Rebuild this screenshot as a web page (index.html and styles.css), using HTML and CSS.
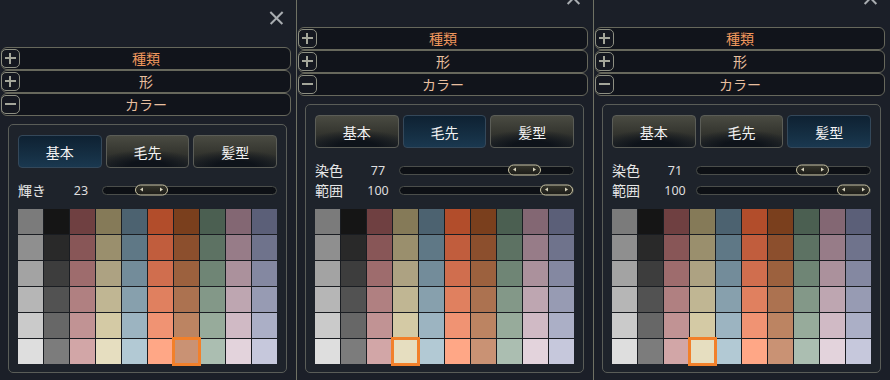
FILE: index.html
```html
<!DOCTYPE html>
<html lang="ja">
<head>
    <meta charset="UTF-8">
    <meta name="viewport" content="width=device-width, initial-scale=1.0">
    <title>ヘアカラー</title>
    <link rel="stylesheet" href="styles.css">
</head>
<body>
    <div class="screens">
        <!-- 基本 -->
        <section class="panel">
            <div class="panel-top"><span class="close-btn"></span></div>
            <div class="acc-row"><span class="acc-icon plus"></span><span class="acc-label hot">種類</span></div>
            <div class="acc-row"><span class="acc-icon plus"></span><span class="acc-label">形</span></div>
            <div class="acc-row"><span class="acc-icon minus"></span><span class="acc-label">カラー</span></div>

            <div class="color-box">
                <div class="tabs">
                    <div class="tab active">基本</div>
                    <div class="tab">毛先</div>
                    <div class="tab">髪型</div>
                </div>
                <div class="slider-row">
                    <span class="slider-label">輝き</span>
                    <span class="slider-value">23</span>
                    <div class="track"><span class="thumb" style="--v: 0.23"></span></div>
                </div>
                <div class="swatch-grid" data-selected="56"></div>
            </div>
        </section>

        <!-- 毛先 -->
        <section class="panel panel-shift">
            <div class="panel-top"><span class="close-btn"></span></div>
            <div class="acc-row"><span class="acc-icon plus"></span><span class="acc-label hot">種類</span></div>
            <div class="acc-row"><span class="acc-icon plus"></span><span class="acc-label">形</span></div>
            <div class="acc-row"><span class="acc-icon minus"></span><span class="acc-label">カラー</span></div>

            <div class="color-box">
                <div class="tabs">
                    <div class="tab">基本</div>
                    <div class="tab active">毛先</div>
                    <div class="tab">髪型</div>
                </div>
                <div class="slider-row">
                    <span class="slider-label">染色</span>
                    <span class="slider-value">77</span>
                    <div class="track"><span class="thumb" style="--v: 0.77"></span></div>
                </div>
                <div class="slider-row">
                    <span class="slider-label">範囲</span>
                    <span class="slider-value">100</span>
                    <div class="track"><span class="thumb" style="--v: 1"></span></div>
                </div>
                <div class="swatch-grid" data-selected="53"></div>
            </div>
        </section>

        <!-- 髪型 -->
        <section class="panel panel-shift">
            <div class="panel-top"><span class="close-btn"></span></div>
            <div class="acc-row"><span class="acc-icon plus"></span><span class="acc-label hot">種類</span></div>
            <div class="acc-row"><span class="acc-icon plus"></span><span class="acc-label">形</span></div>
            <div class="acc-row"><span class="acc-icon minus"></span><span class="acc-label">カラー</span></div>

            <div class="color-box">
                <div class="tabs">
                    <div class="tab">基本</div>
                    <div class="tab">毛先</div>
                    <div class="tab active">髪型</div>
                </div>
                <div class="slider-row">
                    <span class="slider-label">染色</span>
                    <span class="slider-value">71</span>
                    <div class="track"><span class="thumb" style="--v: 0.71"></span></div>
                </div>
                <div class="slider-row">
                    <span class="slider-label">範囲</span>
                    <span class="slider-value">100</span>
                    <div class="track"><span class="thumb" style="--v: 1"></span></div>
                </div>
                <div class="swatch-grid" data-selected="53"></div>
            </div>
        </section>
    </div>

    <script>
        // Palette, one column per hue, light steps from top to bottom
        const palette = [
            ['#7b7b7b', '#8f8f8f', '#a3a3a3', '#b6b6b6', '#cacaca', '#dedede'],
            ['#151515', '#292929', '#3d3d3d', '#525252', '#676767', '#7c7c7c'],
            ['#6f4041', '#885657', '#9e6c6d', '#b08081', '#c19394', '#d2a6a7'],
            ['#857a58', '#9a8f6d', '#ada282', '#c0b693', '#d4caa5', '#e6dec0'],
            ['#4c6270', '#5f7886', '#738c9a', '#87a0ad', '#9cb4c1', '#b2c9d4'],
            ['#b24d2b', '#c15d3d', '#d06e4e', '#e0805f', '#f09373', '#ffa786'],
            ['#7a3f1d', '#8c4f2d', '#9c613e', '#ac7250', '#bc8462', '#c99274'],
            ['#4b5f51', '#5d7263', '#6f8575', '#839888', '#97ab9b', '#abbeb1'],
            ['#836773', '#977c88', '#ab919c', '#bea6b1', '#d0bac5', '#e3d3dc'],
            ['#5b5f78', '#6f738c', '#8488a1', '#979bb3', '#abafc6', '#c6c8dc']
        ];

        // Render swatches into every grid
        document.querySelectorAll('.swatch-grid').forEach(grid => {
            const selected = Number(grid.dataset.selected);

            for (let row = 0; row < 6; row++) {
                for (let col = 0; col < 10; col++) {
                    const cell = document.createElement('div');
                    cell.className = 'swatch';
                    cell.style.backgroundColor = palette[col][row];

                    if (row * 10 + col === selected) {
                        cell.classList.add('selected');
                    }

                    grid.appendChild(cell);
                }
            }
        });
    </script>
</body>
</html>
```

FILE: styles.css
```css
* {
    box-sizing: border-box;
    margin: 0;
    padding: 0;
}

body {
    background-color: #1b1f28;
    font-family: "Noto Sans CJK JP", "Noto Sans", sans-serif;
    color: #e6e6e6;
    height: 380px;
    overflow: hidden;
}

.screens {
    display: flex;
    align-items: flex-start;
}

.panel {
    flex: none;
    width: 297px;
    height: 380px;
    background-color: #1b1f28;
    border-right: 1px solid #6f7164;
    overflow: hidden;
}

.panel:last-child {
    border-right: none;
    width: 296px;
}

.panel-shift {
    margin-top: -20px;
    height: 400px;
}

/* Close button */

.panel-top {
    height: 47px;
    display: flex;
    justify-content: flex-end;
    padding: 11px 13px 0 0;
}

.close-btn {
    width: 13px;
    height: 13px;
    position: relative;
}

.close-btn::before,
.close-btn::after {
    content: '';
    position: absolute;
    left: -2px;
    top: 5.5px;
    width: 17px;
    height: 1.6px;
    background-color: #a9adb1;
    transform: rotate(45deg);
}

.close-btn::after {
    transform: rotate(-45deg);
}

/* Accordion rows */

.acc-row {
    height: 23px;
    margin: 0 5px 0 1px;
    border: 1px solid #67685c;
    border-radius: 6px;
    background-color: #11141b;
    display: grid;
    grid-template-columns: 20px 1fr 20px;
    align-items: center;
}

.acc-icon {
    width: 19px;
    height: 19px;
    margin-left: -1px;
    border: 1.5px solid #8d8f82;
    border-radius: 5px;
    background-color: #151820;
    position: relative;
}

.acc-icon::before {
    content: '';
    position: absolute;
    left: 3px;
    right: 3px;
    top: 7px;
    height: 1.6px;
    background-color: #a4a69a;
}

.acc-icon.plus::after {
    content: '';
    position: absolute;
    top: 3px;
    bottom: 3px;
    left: 7px;
    width: 1.6px;
    background-color: #a4a69a;
}

.acc-label {
    text-align: center;
    font-size: 14px;
    line-height: 21px;
    color: #e8bf9f;
}

.acc-label.hot {
    color: #f0975d;
}

/* Colour box */

.color-box {
    margin: 8px 0 0 8px;
    width: 279px;
    border: 1px solid #5a5d58;
    border-radius: 5px;
    padding: 10px 9px 8px 9px;
    background-color: #1e232b;
}

.tabs {
    display: grid;
    grid-template-columns: repeat(3, 1fr);
    gap: 4px;
}

.tab {
    height: 33px;
    border: 1px solid #5b5d57;
    border-radius: 4px;
    display: flex;
    justify-content: center;
    align-items: center;
    font-size: 14px;
    color: #f2f2f2;
    background:
        radial-gradient(ellipse 70% 55% at 50% 100%, #0e131a 35%, rgba(14, 19, 26, 0) 100%),
        linear-gradient(#4a4b42, #34352f 55%, #22262a);
}

.tab.active {
    border-color: #34485a;
    background: linear-gradient(#0e2132, #163146 70%, #1a3850);
}

/* Sliders */

.slider-row {
    height: 20px;
    display: grid;
    grid-template-columns: 45px 36px 1fr;
    align-items: center;
}

.tabs + .slider-row {
    margin-top: 12px;
}

.slider-label {
    font-size: 14px;
    color: #e6e6e6;
}

.slider-value {
    font-family: "Noto Sans", sans-serif;
    font-size: 12.5px;
    text-align: center;
    color: #dedede;
}

.track {
    margin-left: 3px;
    height: 9px;
    border: 1px solid #4b4e4b;
    border-radius: 5px;
    background-color: #0d1015;
    position: relative;
}

.thumb {
    position: absolute;
    top: 50%;
    left: calc((100% - 33px) * var(--v));
    width: 33px;
    height: 11px;
    transform: translateY(-50%);
    border: 1px solid #cbc5a5;
    border-radius: 6px;
    background: linear-gradient(#35352c, #1c1c18);
}

.thumb::before,
.thumb::after {
    content: '';
    position: absolute;
    top: 2px;
    border-top: 2.5px solid transparent;
    border-bottom: 2.5px solid transparent;
}

.thumb::before {
    left: 4px;
    border-right: 3px solid #d8d4be;
}

.thumb::after {
    right: 4px;
    border-left: 3px solid #d8d4be;
}

/* Swatches */

.swatch-grid {
    margin-top: 9px;
    display: grid;
    grid-template-columns: repeat(10, 1fr);
    grid-auto-rows: 25px;
    gap: 1px;
    background-color: #1a1d22;
}

.swatch.selected {
    position: relative;
    z-index: 1;
    outline: 3px solid #f2802a;
    outline-offset: -1px;
}
```
